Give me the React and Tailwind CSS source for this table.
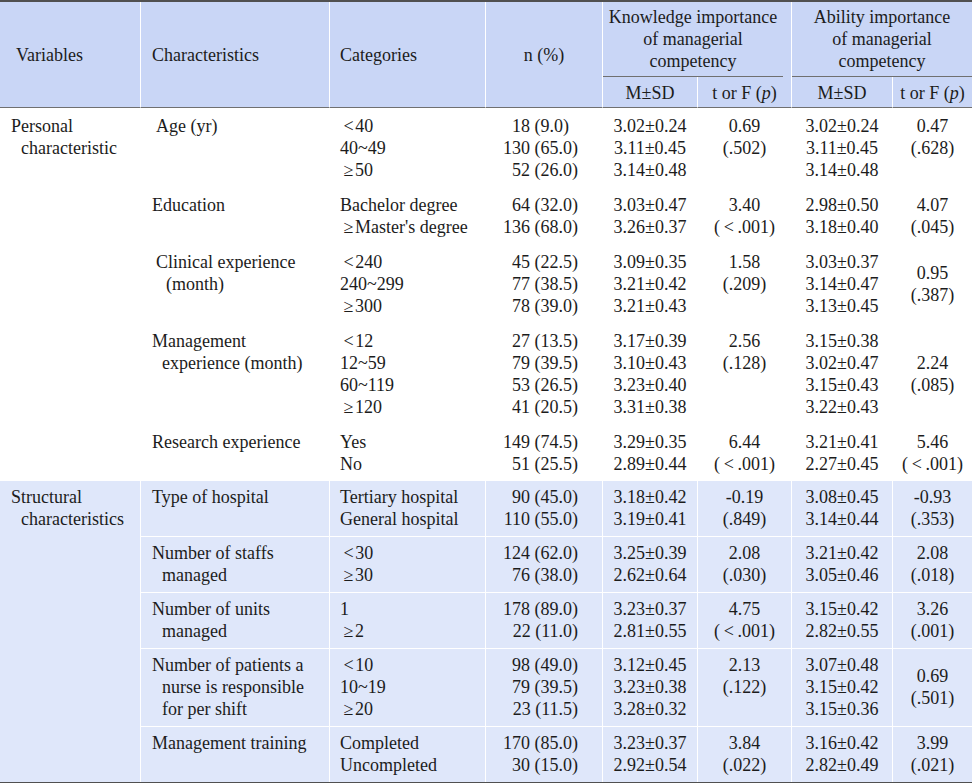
const TS = '\u2009';
const HS = '\u200A';
const lt = (v) => `${TS}<${HS}${v}`;
const ge = (v) => `${TS}≥${HS}${v}`;
const p001 = `(${TS}<${TS}.001)`;

const personal = [
  {
    char: ['Age (yr)'], shift: true,
    cats: [lt('40'), '40~49', ge('50')],
    n: ['18 (9.0)\u2007', '130 (65.0)', '52 (26.0)'],
    k: ['3.02±0.24', '3.11±0.45', '3.14±0.48'], kt: ['0.69', '(.502)'],
    a: ['3.02±0.24', '3.11±0.45', '3.14±0.48'], at: ['0.47', '(.628)'],
  },
  {
    char: ['Education'],
    cats: ['Bachelor degree', ge("Master's degree")],
    n: ['64 (32.0)', '136 (68.0)'],
    k: ['3.03±0.47', '3.26±0.37'], kt: ['3.40', p001],
    a: ['2.98±0.50', '3.18±0.40'], at: ['4.07', '(.045)'],
  },
  {
    char: ['Clinical experience', '(month)'], shift: true,
    cats: [lt('240'), '240~299', ge('300')],
    n: ['45 (22.5)', '77 (38.5)', '78 (39.0)'],
    k: ['3.09±0.35', '3.21±0.42', '3.21±0.43'], kt: ['1.58', '(.209)'],
    a: ['3.03±0.37', '3.14±0.47', '3.13±0.45'], at: ['0.95', '(.387)'], mid: true,
  },
  {
    char: ['Management', 'experience (month)'],
    cats: [lt('12'), '12~59', '60~119', ge('120')],
    n: ['27 (13.5)', '79 (39.5)', '53 (26.5)', '41 (20.5)'],
    k: ['3.17±0.39', '3.10±0.43', '3.23±0.40', '3.31±0.38'], kt: ['2.56', '(.128)'],
    a: ['3.15±0.38', '3.02±0.47', '3.15±0.43', '3.22±0.43'], at: ['2.24', '(.085)'], mid: true,
  },
  {
    char: ['Research experience'],
    cats: ['Yes', 'No'],
    n: ['149 (74.5)', '51 (25.5)'],
    k: ['3.29±0.35', '2.89±0.44'], kt: ['6.44', p001],
    a: ['3.21±0.41', '2.27±0.45'], at: ['5.46', p001],
  },
];

const structural = [
  {
    char: ['Type of hospital'],
    cats: ['Tertiary hospital', 'General hospital'],
    n: ['90 (45.0)', '110 (55.0)'],
    k: ['3.18±0.42', '3.19±0.41'], kt: ['-0.19', '(.849)'],
    a: ['3.08±0.45', '3.14±0.44'], at: ['-0.93', '(.353)'],
  },
  {
    char: ['Number of staffs', 'managed'],
    cats: [lt('30'), ge('30')],
    n: ['124 (62.0)', '76 (38.0)'],
    k: ['3.25±0.39', '2.62±0.64'], kt: ['2.08', '(.030)'],
    a: ['3.21±0.42', '3.05±0.46'], at: ['2.08', '(.018)'],
  },
  {
    char: ['Number of units', 'managed'],
    cats: ['1', ge('2')],
    n: ['178 (89.0)', '22 (11.0)'],
    k: ['3.23±0.37', '2.81±0.55'], kt: ['4.75', p001],
    a: ['3.15±0.42', '2.82±0.55'], at: ['3.26', '(.001)'],
  },
  {
    char: ['Number of patients a', 'nurse is responsible', 'for per shift'],
    cats: [lt('10'), '10~19', ge('20')],
    n: ['98 (49.0)', '79 (39.5)', '23 (11.5)'],
    k: ['3.12±0.45', '3.23±0.38', '3.28±0.32'], kt: ['2.13', '(.122)'],
    a: ['3.07±0.48', '3.15±0.42', '3.15±0.36'], at: ['0.69', '(.501)'], mid: true,
  },
  {
    char: ['Management training'],
    cats: ['Completed', 'Uncompleted'],
    n: ['170 (85.0)', '30 (15.0)'],
    k: ['3.23±0.37', '2.92±0.54'], kt: ['3.84', '(.022)'],
    a: ['3.16±0.42', '2.82±0.49'], at: ['3.99', '(.021)'],
  },
];

function Lines({ items, className = '' }) {
  return items.map((t, i) => (
    <div key={i} className={className}>{t}</div>
  ));
}

function Hanging({ items }) {
  return items.map((t, i) => (
    <div key={i} className={i > 0 ? 'pl-[10px]' : ''}>{t}</div>
  ));
}

function BodyRows({ rows, group, blue }) {
  const bg = blue ? 'bg-[#dfe7fa]' : 'bg-white';
  const pad = blue ? 'pt-[5px] pb-[6px]' : 'pt-[7px] pb-[6px]';
  const cell = `${bg} ${pad} align-top border-r border-white`;
  const sep = blue ? 'border-t border-t-white' : '';
  return rows.map((r, i) => (
    <tr key={i}>
      {i === 0 && (
        <td rowSpan={rows.length} className={`${cell} pl-[11px]`}>
          <Hanging items={group} />
        </td>
      )}
      <td className={`${cell} ${i > 0 ? sep : ''} pl-[11px]`}>
        <div className={r.shift ? 'pl-[4px]' : ''}>
          <Hanging items={r.char} />
        </div>
      </td>
      <td className={`${cell} ${i > 0 ? sep : ''} pl-[10px]`}>
        <Lines items={r.cats} />
      </td>
      <td className={`${cell} ${i > 0 ? sep : ''} text-right pr-[24px]`}>
        <Lines items={r.n} />
      </td>
      <td className={`${cell} ${i > 0 ? sep : ''} text-center`}>
        <Lines items={r.k} />
      </td>
      <td className={`${cell} ${i > 0 ? sep : ''} text-center`}>
        <Lines items={r.kt} />
      </td>
      <td className={`${cell} ${i > 0 ? sep : ''} text-center`}>
        <Lines items={r.a} />
      </td>
      <td className={`${bg} ${pad} ${i > 0 ? sep : ''} text-center ${r.mid ? 'align-middle' : 'align-top'}`}>
        <Lines items={r.at} />
      </td>
    </tr>
  ));
}

export default function App() {
  const head = 'bg-[#c9d6f6] border-r border-white';
  const headBottom = 'border-b border-b-[#707070]';
  return (
    <div className="w-[972px] bg-white text-[#1c1c1c] font-['Liberation_Serif',serif] text-[18px] leading-[22px] whitespace-nowrap">
      <table className="w-full table-fixed border-separate border-spacing-0 border-t-2 border-b-2 border-[#505050]">
        <colgroup>
          <col className="w-[141px]" />
          <col className="w-[189px]" />
          <col className="w-[156px]" />
          <col className="w-[117px]" />
          <col className="w-[95px]" />
          <col className="w-[94px]" />
          <col className="w-[101px]" />
          <col className="w-[79px]" />
        </colgroup>
        <thead>
          <tr>
            <th rowSpan={2} className={`${head} ${headBottom} font-normal text-left pl-[16px] align-middle`}>Variables</th>
            <th rowSpan={2} className={`${head} ${headBottom} font-normal text-left pl-[11px] align-middle`}>Characteristics</th>
            <th rowSpan={2} className={`${head} ${headBottom} font-normal text-left pl-[10px] align-middle`}>Categories</th>
            <th rowSpan={2} className={`${head} ${headBottom} font-normal text-center align-middle`}>n (%)</th>
            <th colSpan={2} className={`${head} font-normal p-0 align-top`}>
              <div className="mr-[8px] pt-[4px] pb-[4px] border-b border-[#707070] text-center">
                <div>Knowledge importance</div>
                <div>of managerial</div>
                <div>competency</div>
              </div>
            </th>
            <th colSpan={2} className="bg-[#c9d6f6] font-normal p-0 align-top">
              <div className="pt-[4px] pb-[4px] border-b border-[#707070] text-center">
                <div>Ability importance</div>
                <div>of managerial</div>
                <div>competency</div>
              </div>
            </th>
          </tr>
          <tr>
            <th className={`${head} ${headBottom} font-normal text-center pt-[5px] pb-[3px]`}>M±SD</th>
            <th className={`${head} ${headBottom} font-normal text-center pt-[5px] pb-[3px]`}>
              t or F (<i>p</i>)
            </th>
            <th className={`${head} ${headBottom} font-normal text-center pt-[5px] pb-[3px]`}>M±SD</th>
            <th className={`bg-[#c9d6f6] ${headBottom} font-normal text-center pt-[5px] pb-[3px]`}>
              t or F (<i>p</i>)
            </th>
          </tr>
        </thead>
        <tbody>
          <BodyRows rows={personal} group={['Personal', 'characteristic']} />
          <BodyRows rows={structural} group={['Structural', 'characteristics']} blue />
        </tbody>
      </table>
    </div>
  );
}
